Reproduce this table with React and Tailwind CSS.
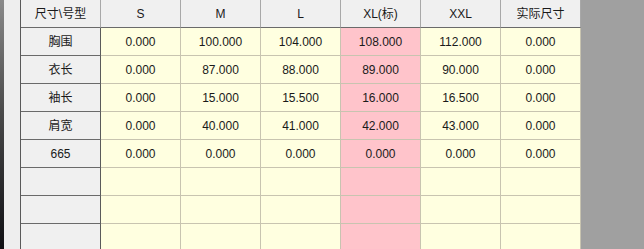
import React from "react";

const cols = ["S", "M", "L", "XL(标)", "XXL", "实际尺寸"];
const rows = [
  ["胸围", "0.000", "100.000", "104.000", "108.000", "112.000", "0.000"],
  ["衣长", "0.000", "87.000", "88.000", "89.000", "90.000", "0.000"],
  ["袖长", "0.000", "15.000", "15.500", "16.000", "16.500", "0.000"],
  ["肩宽", "0.000", "40.000", "41.000", "42.000", "43.000", "0.000"],
  ["665", "0.000", "0.000", "0.000", "0.000", "0.000", "0.000"],
  ["", "", "", "", "", "", ""],
  ["", "", "", "", "", "", ""],
  ["", "", "", "", "", "", ""],
];

export default function App() {
  return (
    <div
      className="flex w-[644px] h-[249px] overflow-hidden bg-[#a0a0a0] text-[12px] text-[#1a1a1a]"
      style={{ fontFamily: '"Liberation Sans", "Noto Sans CJK SC", sans-serif' }}
    >
      <div className="w-[4px] shrink-0 bg-gradient-to-b from-[#8a8a8a] via-[#4a4a4a] via-45% to-[#101014]" />
      <div className="w-[16px] shrink-0 bg-[#eeeeee]" />
      <div className="shrink-0 border-l border-[#5a5a5a] flex flex-col">
        <div className="flex h-[28px] shrink-0">
          <div className="w-[80px] bg-[#f0f0f0] border-r border-b border-r-[#a8a8a8] border-b-[#6a6a6a] flex items-center justify-center">
            尺寸\号型
          </div>
          {cols.map((c) => (
            <div
              key={c}
              className="w-[80px] bg-[#f0f0f0] border-r border-b border-r-[#a8a8a8] border-b-[#6a6a6a] flex items-center justify-center"
            >
              {c}
            </div>
          ))}
        </div>
        {rows.map((r, i) => (
          <div key={i} className="flex h-[28px] shrink-0">
            <div className="w-[80px] bg-[#f0f0f0] border-r border-b border-r-[#5a5a5a] border-b-[#6a6a6a] flex items-center justify-center">
              {r[0]}
            </div>
            {r.slice(1).map((v, j) => (
              <div
                key={j}
                className={
                  j === 3
                    ? "w-[80px] bg-[#ffc4cb] border-r border-b border-[#c8c4b0] flex items-center justify-center"
                    : "w-[80px] bg-[#ffffe0] border-r border-b border-[#c8c4b0] flex items-center justify-center"
                }
              >
                {v}
              </div>
            ))}
          </div>
        ))}
      </div>
      <div className="flex-1 bg-[#a0a0a0]" />
    </div>
  );
}
